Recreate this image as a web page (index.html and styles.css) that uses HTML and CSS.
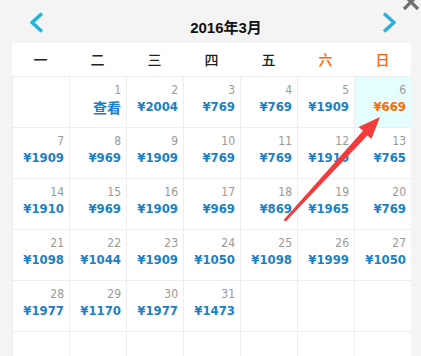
FILE: index.html
```html
<!DOCTYPE html>
<html lang="zh-CN">
<head>
<meta charset="utf-8">
<title>2016年3月</title>
<link rel="stylesheet" href="styles.css">
</head>
<body>
<div class="cal">
  <div class="top">
    <span class="nav prev"><svg width="14" height="22" viewBox="0 0 14 22"><polyline points="12,1.5 2,10.5 12,19.5" fill="none" stroke="#27b3d6" stroke-width="3.6"/></svg></span>
    <div class="title">2016年3月</div>
    <span class="nav next"><svg width="14" height="22" viewBox="0 0 14 22"><polyline points="2,1.5 12,10.5 2,19.5" fill="none" stroke="#27b3d6" stroke-width="3.6"/></svg></span>
  </div>
  <div class="week">
    <span>一</span><span>二</span><span>三</span><span>四</span><span>五</span><span class="wkend">六</span><span class="wkend">日</span>
  </div>
  <div class="grid">
    <div class="cell"></div>
    <div class="cell"><div class="d">1</div><div class="p look">查看</div></div>
    <div class="cell"><div class="d">2</div><div class="p">¥2004</div></div>
    <div class="cell"><div class="d">3</div><div class="p">¥769</div></div>
    <div class="cell"><div class="d">4</div><div class="p">¥769</div></div>
    <div class="cell"><div class="d">5</div><div class="p">¥1909</div></div>
    <div class="cell hl"><div class="d">6</div><div class="p low">¥669</div></div>

    <div class="cell"><div class="d">7</div><div class="p">¥1909</div></div>
    <div class="cell"><div class="d">8</div><div class="p">¥969</div></div>
    <div class="cell"><div class="d">9</div><div class="p">¥1909</div></div>
    <div class="cell"><div class="d">10</div><div class="p">¥769</div></div>
    <div class="cell"><div class="d">11</div><div class="p">¥769</div></div>
    <div class="cell"><div class="d">12</div><div class="p">¥1910</div></div>
    <div class="cell"><div class="d">13</div><div class="p">¥765</div></div>

    <div class="cell"><div class="d">14</div><div class="p">¥1910</div></div>
    <div class="cell"><div class="d">15</div><div class="p">¥969</div></div>
    <div class="cell"><div class="d">16</div><div class="p">¥1909</div></div>
    <div class="cell"><div class="d">17</div><div class="p">¥969</div></div>
    <div class="cell"><div class="d">18</div><div class="p">¥869</div></div>
    <div class="cell"><div class="d">19</div><div class="p">¥1965</div></div>
    <div class="cell"><div class="d">20</div><div class="p">¥769</div></div>

    <div class="cell"><div class="d">21</div><div class="p">¥1098</div></div>
    <div class="cell"><div class="d">22</div><div class="p">¥1044</div></div>
    <div class="cell"><div class="d">23</div><div class="p">¥1909</div></div>
    <div class="cell"><div class="d">24</div><div class="p">¥1050</div></div>
    <div class="cell"><div class="d">25</div><div class="p">¥1098</div></div>
    <div class="cell"><div class="d">26</div><div class="p">¥1999</div></div>
    <div class="cell"><div class="d">27</div><div class="p">¥1050</div></div>

    <div class="cell"><div class="d">28</div><div class="p">¥1977</div></div>
    <div class="cell"><div class="d">29</div><div class="p">¥1170</div></div>
    <div class="cell"><div class="d">30</div><div class="p">¥1977</div></div>
    <div class="cell"><div class="d">31</div><div class="p">¥1473</div></div>
    <div class="cell"></div>
    <div class="cell"></div>
    <div class="cell"></div>

    <div class="cell"></div>
    <div class="cell"></div>
    <div class="cell"></div>
    <div class="cell"></div>
    <div class="cell"></div>
    <div class="cell"></div>
    <div class="cell"></div>
  </div>
</div>
<svg class="close" width="20" height="14" viewBox="0 0 20 14"><path d="M3,-5 L17,9 M17,-5 L3,9" stroke="#707070" stroke-width="3.2" fill="none"/></svg>
<svg class="mark" width="421" height="356" viewBox="0 0 421 356"><polygon points="283.5,220 363,130.8 358.6,127 380,117 371.4,139 367.4,135.4 285.8,221.5" fill="#f23c3c"/></svg>
</body>
</html>
```
FILE: styles.css
```css
html, body {
  margin: 0;
  padding: 0;
}
body {
  background: #f4f4f4;
  width: 421px;
  height: 356px;
  overflow: hidden;
  position: relative;
  font-family: "DejaVu Sans Condensed", "DejaVu Sans", "Noto Sans CJK SC", sans-serif;
  font-stretch: condensed;
}
.cal {
  margin-left: 12px;
  width: 399px;
}
.top {
  height: 43px;
  display: flex;
  align-items: center;
  padding: 0 15px 0 18px;
}
.nav {
  display: flex;
  width: 14px;
  height: 22px;
  margin-top: 2px;
}
.title {
  flex: 1;
  text-align: center;
  padding-left: 26px;
  font-family: "Liberation Sans", "Noto Sans CJK SC", sans-serif;
  font-stretch: normal;
  font-weight: bold;
  font-size: 15px;
  color: #111;
  margin-top: 9px;
}
.week {
  height: 33px;
  background: #fff;
  display: grid;
  grid-template-columns: repeat(7, 57px);
  font-family: "Noto Sans CJK SC", sans-serif;
  font-stretch: normal;
  font-size: 14px;
  font-weight: 500;
  line-height: 33px;
  color: #222;
  text-align: center;
}
.week span {
  display: block;
}
.week .wkend {
  color: #ff6600;
}
.grid {
  display: grid;
  grid-template-columns: repeat(7, 56px);
  grid-auto-rows: 50px;
  gap: 1px;
  padding: 1px 0 0 1px;
  background: #eeeeee;
}
.cell {
  background: #fff;
  text-align: right;
  padding: 6px 5px 0 0;
}
.cell.hl {
  background: #e4fdfd;
}
.d {
  font-size: 12px;
  line-height: 15px;
  color: #999;
}
.p {
  font-size: 13px;
  line-height: 18px;
  font-weight: bold;
  color: #1b7fc4;
}
.p.look {
  font-family: "Noto Sans CJK SC", sans-serif;
  font-size: 14px;
}
.p.low {
  color: #ff6a00;
}
.close {
  position: absolute;
  left: 401px;
  top: 0;
}
.mark {
  position: absolute;
  left: 0;
  top: 0;
}
```
